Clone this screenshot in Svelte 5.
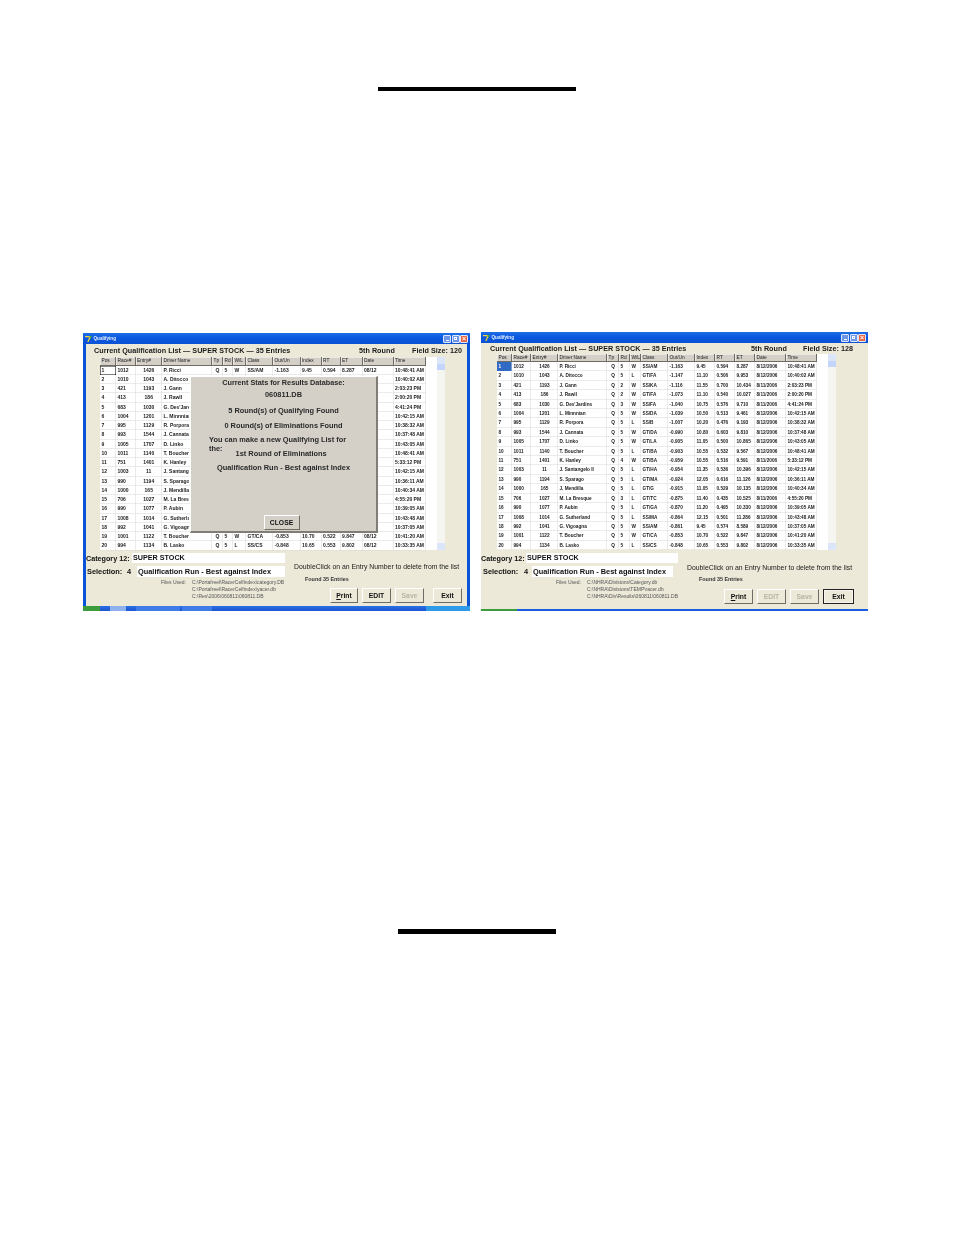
<script>
  const rows = [
    ['1','1012','1426','P. Ricci','Q','5','W','SS/AM','-1.163','9.45','0.594','8.287','8/12/2006','10:48:41 AM'],
    ['2','1010','1043','A. Ditocco','Q','5','L','GT/FA','-1.147','11.10','0.506','9.953','8/12/2006','10:40:02 AM'],
    ['3','421','1193','J. Gann','Q','2','W','SS/KA','-1.116','11.55','0.700','10.434','8/11/2006','2:03:23 PM'],
    ['4','413','186','J. Rawll','Q','2','W','GT/FA','-1.073','11.10','0.540','10.027','8/11/2006','2:00:20 PM'],
    ['5','683','1030',"G. Des'Jardins",'Q','3','W','SS/FA','-1.040','10.75','0.576','9.710','8/11/2006','4:41:24 PM'],
    ['6','1004','1201','L. Minnnian','Q','5','W','SS/DA','-1.039','10.50','0.513','9.461','8/12/2006','10:42:15 AM'],
    ['7','995','1129','R. Porpora','Q','5','L','SS/B','-1.007','10.20','0.476','9.193','8/12/2006','10:38:32 AM'],
    ['8','993','1544','J. Cannata','Q','5','W','GT/DA','-0.990','10.80','0.603','9.810','8/12/2006','10:37:48 AM'],
    ['9','1005','1707','D. Linko','Q','5','W','GT/LA','-0.905','11.05','0.500','10.865','8/12/2006','10:43:05 AM'],
    ['10','1011','1140','T. Boucher','Q','5','L','GT/BA','-0.903','10.55','0.532','9.567','8/12/2006','10:48:41 AM'],
    ['11','751','1401','K. Hanley','Q','4','W','GT/BA','-0.959','10.55','0.516','9.591','8/11/2006','5:33:12 PM'],
    ['12','1003','11','J. Santangelo II','Q','5','L','GT/HA','-0.954','11.35','0.536','10.396','8/12/2006','10:42:15 AM'],
    ['13','990','1194','S. Sparago','Q','5','L','GT/MA','-0.924','12.05','0.616','11.126','8/12/2006','10:36:11 AM'],
    ['14','1000','165','J. Mendilla','Q','5','L','GT/G','-0.915','11.05','0.529','10.135','8/12/2006','10:40:34 AM'],
    ['15','706','1027','M. La Bresque','Q','3','L','GT/TC','-0.875','11.40','0.435','10.525','8/11/2006','4:55:20 PM'],
    ['16','990','1077','P. Aubin','Q','5','L','GT/GA','-0.870','11.20','0.495','10.330','8/12/2006','10:39:05 AM'],
    ['17','1008','1014','G. Sutherland','Q','5','L','SS/MA','-0.864','12.15','0.501','11.286','8/12/2006','10:43:48 AM'],
    ['18','992','1041','G. Vigoagna','Q','5','W','SS/AM','-0.861','9.45','0.574','8.589','8/12/2006','10:37:05 AM'],
    ['19','1001','1122','T. Boucher','Q','5','W','GT/CA','-0.853','10.70','0.522','9.847','8/12/2006','10:41:20 AM'],
    ['20','994','1134','B. Lasko','Q','5','L','SS/CS','-0.848','10.65','0.553','9.802','8/12/2006','10:33:35 AM']
  ];
  const heads = ['Pos','Race#','Entry#','Driver Name','Tp','Rd','W/L','Class','Out/Un','Index','RT','ET','Date','Time'];
  const shortDate = (r) => '0' + r[12].slice(0, 4);
  const behindModal = (i) => i >= 1 && i <= 17;
  const cellText = (side, r, i, j) => {
    if (side !== 'left') return r[j];
    if (behindModal(i) && j >= 4 && j <= 12) return '';
    return j === 12 ? shortDate(r) : r[j];
  };
  const windows = [
    {
      side: 'left', field: '120', cat: '12', sel: '4', editOff: false,
      files: ['C:\\Portafreel\\RacerCelfindex\\category.DB', 'C:\\Portafreel\\RacerCelfindex\\yacer.db', 'C:\\Res\\2006\\060811\\060811.DB']
    },
    {
      side: 'right', field: '128', cat: '12', sel: '4', editOff: true,
      files: ['C:\\NHRA\\Divisions\\Category.db', 'C:\\NHRA\\Divisions\\TEMP\\racer.db', 'C:\\NHRA\\Div\\Results\\060811\\060811.DB']
    }
  ];
</script>

<div class="page">
  <div class="rule-top"></div>
  <div class="shots">
    {#each windows as w}
      <section class="win {w.side}">
        <header class="title">
          <svg class="logo" viewBox="0 0 8 8" width="7" height="7"><path d="M0 1h7L4 8H2.6l2.2-5.5H0z" fill="#f4d23c"/><path d="M5 1h3L6 5z" fill="#3fa34a"/></svg>
          <span class="title-text">Qualifying</span>
          <span class="tbtn"><i class="min"></i></span>
          <span class="tbtn"><i class="max"></i></span>
          <span class="tbtn close">×</span>
        </header>
        <div class="body">
          <div class="heading">
            <span class="h-list">Current Qualification List — SUPER STOCK — 35 Entries</span>
            <span class="h-round">5th Round</span>
            <span class="h-field">Field Size: {w.field}</span>
          </div>
          <div class="list">
            <div class="grid">
              <div class="row head">
                {#each heads as h}<span class="cell">{h}</span>{/each}
              </div>
              {#each rows as r, i}
                <div class="row">
                  {#each r as c, j}
                    <span class="cell" class:sel={i === 0 && j === 0} class:mid={j === 2 || j === 4} class:clip={w.side === 'left' && behindModal(i) && j === 3}>{cellText(w.side, r, i, j)}</span>
                  {/each}
                </div>
              {/each}
            </div>
            <div class="blank"></div>
            <div class="scroll">
              <span class="arrow up"></span>
              <span class="thumb"></span>
              <span class="arrow down"></span>
            </div>
          </div>
          <div class="footer">
            <div class="f-left">
              <div class="line cat">
                <span class="lbl">Category {w.cat}:</span>
                <span class="input">SUPER STOCK</span>
              </div>
              <div class="line selrow">
                <span class="lbl">Selection:</span>
                <span class="num">{w.sel}</span>
                <span class="input big">Qualification Run - Best against Index</span>
              </div>
              <div class="files">
                <span class="f-lbl">Files Used:</span>
                <div class="f-paths">
                  {#each w.files as f}<span>{f}</span>{/each}
                </div>
              </div>
            </div>
            <div class="f-right">
              <div class="note">DoubleClick on an Entry Number to delete from the list</div>
              <div class="found">Found 35 Entries</div>
              <div class="btns">
                <button class="print">Print</button>
                <button disabled={w.editOff}>EDIT</button>
                <button disabled>Save</button>
                <button class="exit" class:on={w.editOff}>Exit</button>
              </div>
            </div>
          </div>
        </div>
        {#if w.side === 'left'}
          <div class="modal">
            <p class="m1">Current Stats for Results Database:</p>
            <p class="m2">060811.DB</p>
            <p class="m3">5 Round(s) of Qualifying Found</p>
            <p class="m4">0 Round(s) of Eliminations Found</p>
            <p class="m5">You can make a new Qualifying List for</p>
            <div class="m-row">
              <p>the:</p>
              <p class="m6">1st Round of Eliminations</p>
            </div>
            <p class="m7">Qualification Run - Best against Index</p>
            <button class="closebtn">CLOSE</button>
          </div>
          <div class="taskbar">
            <span class="start"></span>
            <span class="tray t1"></span>
            <span class="tray t2"></span>
            <span class="tray t3"></span>
            <span class="clock"></span>
          </div>
        {:else}
          <div class="bottomline"><span class="start"></span></div>
        {/if}
      </section>
    {/each}
  </div>
  <div class="rule-bottom"></div>
</div>

<style>
  :global(body) { margin: 0; background: #fff; }
  .page {
    width: 954px; height: 1235px; background: #fff; overflow: hidden;
    display: flex; flex-direction: column; align-items: center;
    font-family: "Liberation Sans", Arial, sans-serif; color: #111;
  }
  .rule-top { width: 198px; height: 4px; margin-top: 87px; background: #000; flex: none; }
  .rule-bottom { width: 158px; height: 5px; margin-top: 318px; background: #000; flex: none; }
  .shots {
    align-self: flex-start; margin: 241px 0 0 83px; display: flex; gap: 11px;
    align-items: flex-end; height: 279px; flex: none;
  }
  .win {
    position: relative; width: 387px; display: flex; flex-direction: column;
    overflow: hidden; background: #0a52d8; filter: blur(0.35px);
  }
  .win.left { height: 278px; }
  .win.right { height: 279px; width: 387px; background: #ece9d8; }

  .title {
    height: 11px; flex: none; display: flex; align-items: center; gap: 0.5px; padding: 0 2px;
    background: linear-gradient(#1f6fe8, #0a58e0 45%, #0a52d4);
    color: #fff;
  }
  .logo { margin-right: 1px; }
  .title-text { font-size: 4.6px; font-weight: 700; margin-right: auto; color: #e8f0ff; }
  .tbtn {
    width: 8px; height: 8px; border-radius: 1px; background: #6d95e8; border: 0.5px solid #dfe8ff;
    box-sizing: border-box; display: flex; align-items: center; justify-content: center;
    font-size: 7px; line-height: 1; font-weight: 700; color: #fff;
  }
  .tbtn.close { background: #e5663f; }
  .tbtn .min { width: 3px; height: 1px; background: #fff; margin-top: 3px; }
  .tbtn .max { width: 3.5px; height: 3.5px; border: 0.5px solid #fff; border-top-width: 1px; box-sizing: border-box; }

  .body { flex: 1; min-height: 0; background: #ece9d8; display: flex; flex-direction: column; }
  .left .body { margin: 0 3px; }

  .heading {
    display: flex; align-items: center; font-weight: 700; font-size: 7.2px; letter-spacing: 0.03px;
    white-space: nowrap; flex: none; color: #1a1a1a;
  }
  .left .heading { height: 13px; padding-left: 8px; }
  .right .heading { height: 11px; padding-left: 9px; }
  .h-list { flex: none; }
  .left .h-list { width: 265px; }
  .right .h-list { width: 261px; }
  .left .h-round { width: 53px; }
  .right .h-round { width: 52px; }

  .list { display: flex; flex: none; }
  .left .list {
    margin-left: 14px; height: 193px;
    --cols: 16px 19.5px 26.5px 50px 11px 10px 13px 27px 27.5px 21px 19px 22px 31px 32px;
    --rowh: 9.26px; --headh: 8.5px; --fs: 5px;
  }
  .right .list {
    margin-left: 16px; height: 196px;
    --cols: 15px 19px 27px 49px 12px 11px 11px 27px 27px 20px 20px 20px 31px 31px;
    --rowh: 9.42px; --headh: 8px; --fs: 4.7px;
  }
  .grid { background: #fff; flex: none; display: flex; flex-direction: column; }
  .row {
    display: grid; grid-template-columns: var(--cols); height: var(--rowh);
    font-size: var(--fs); font-weight: 700; color: #222; box-shadow: inset 0 -0.5px 0 #d9d7d0;
  }
  .row.head {
    height: var(--headh); font-weight: 400; font-size: 4.8px; background: #d4d0c8; box-shadow: none;
  }
  .cell {
    padding-left: 1.5px; overflow: hidden; white-space: nowrap; line-height: var(--rowh);
    box-shadow: inset -0.5px 0 0 #d9d7d0; box-sizing: border-box;
  }
  .cell.mid { text-align: center; padding-left: 0; }
  .cell.clip { width: 27px; box-shadow: none; }
  .head .cell {
    line-height: var(--headh); box-shadow: inset -1px -1px 0 #6f6c64, inset 0.5px 0.5px 0 #fff;
  }
  .left .cell.sel { box-shadow: inset 0 0 0 0.6px #111; }
  .right .cell.sel { background: #316ac5; color: #fff; }
  .blank { background: #fff; flex: none; width: 11px; }
  .scroll {
    width: 8px; background: #f5f5f2; display: flex; flex-direction: column; position: relative;
  }
  .arrow { height: 7px; background: #dbe6fb; flex: none; }
  .arrow.down { margin-top: auto; }
  .thumb { height: 6px; background: #c3d5fb; flex: none; }

  .footer { display: grid; flex: 1; min-height: 0; font-size: 7.4px; }
  .left .footer { grid-template-columns: 203px 1fr; }
  .right .footer { grid-template-columns: 202px 1fr; }
  .line { display: flex; align-items: center; white-space: nowrap; font-weight: 700; }
  .lbl { flex: none; }
  .input {
    background: #fff; flex: none; height: 10px; line-height: 10px; padding-left: 1px; overflow: hidden;
    font-weight: 700; box-sizing: border-box;
  }
  .cat { margin-top: 3px; height: 10px; font-size: 7.2px; }
  .left .cat .lbl { width: 46px; }
  .right .cat .lbl { width: 45px; }
  .left .cat .input { width: 153px; }
  .right .cat .input { width: 152px; }
  .selrow { margin-top: 3px; height: 11px; }
  .selrow .lbl { width: 41px; padding-left: 1px; box-sizing: border-box; }
  .right .selrow .lbl { padding-left: 2px; width: 43px; }
  .num { width: 10px; flex: none; }
  .right .num { width: 8px; }
  .input.big { height: 11px; line-height: 11px; }
  .left .input.big { width: 148px; }
  .right .input.big { width: 141px; }
  .files { display: flex; font-size: 5px; color: #555; margin-top: 2px; padding-left: 75px; }
  .f-lbl { width: 31px; flex: none; line-height: 7.2px; }
  .f-paths { display: flex; flex-direction: column; white-space: nowrap; line-height: 7.2px; }

  .f-right { display: flex; flex-direction: column; min-width: 0; }
  .note { white-space: nowrap; font-size: 6.85px; line-height: 8px; font-weight: 400; color: #1a1a1a; margin-top: 13px; }
  .left .note { padding-left: 5px; }
  .right .note { padding-left: 4px; margin-top: 14px; }
  .found { font-size: 5.4px; line-height: 6px; font-weight: 700; color: #333; margin-top: 5px; padding-left: 16px; }
  .right .found { margin-top: 4px; }
  .btns { display: flex; gap: 4px; margin-top: 6px; padding-right: 5px; justify-content: flex-end; }
  .right .btns { padding-right: 14px; margin-top: 7px; }
  .btns button {
    width: 29px; height: 15px; padding: 0; background: #ece9d8; font: 700 6.8px "Liberation Sans", Arial, sans-serif; color: #111;
    border: 0.5px solid #fff; border-right: 1px solid #6f6c64; border-bottom: 1px solid #6f6c64; box-sizing: border-box;
  }
  .btns button:disabled { color: #b8b5a7; }
  .left .btns .print { width: 28px; }
  .left .btns .exit { margin-left: 5px; }
  .btns .exit.on { width: 31px; border: 1px solid #222; box-shadow: inset 0 0 0 0.5px #fff; }
  .print::first-letter { text-decoration: underline; }

  .modal {
    position: absolute; left: 107px; top: 43px; width: 188px; height: 157px; box-sizing: border-box;
    background: #d4d0c8; border: 0.5px solid #fff; border-right: 2px solid #807d76; border-bottom: 2px solid #807d76;
    display: flex; flex-direction: column; align-items: center; font-size: 7.4px; font-weight: 700; color: #2a2a2a;
  }
  .modal p { margin: 0; line-height: 8px; white-space: nowrap; }
  .modal .m1 { margin-top: 1.5px; font-size: 7.25px; }
  .modal .m2 { margin-top: 4px; }
  .modal .m3 { margin-top: 8px; }
  .modal .m4 { margin-top: 7px; }
  .modal .m5 { margin-top: 6px; align-self: flex-start; padding-left: 18px; }
  .m-row { display: flex; align-self: stretch; padding-left: 18px; height: 13px; margin-top: 1px; }
  .modal .m6 { margin: 5px 0 0 13px; }
  .modal .m7 { margin-top: 6px; }
  .closebtn {
    margin: 43px 4px 0 0; width: 36px; height: 15px; padding: 0; background: #d4d0c8;
    font: 700 6.8px "Liberation Sans", Arial, sans-serif; color: #111;
    border: 0.5px solid #fff; border-right: 1px solid #6f6c64; border-bottom: 1px solid #6f6c64;
  }
  .taskbar {
    flex: none; height: 5px; background: linear-gradient(#2a6fe6, #1b54cf); display: flex; align-items: stretch;
  }
  .start { width: 17px; background: #3c9b3c; display: block; }
  .tray { display: block; background: #3f7ce8; margin-right: 2px; }
  .t1 { width: 16px; margin-left: 10px; background: #8fb2ee; }
  .t2 { width: 44px; margin-left: 8px; }
  .t3 { width: 30px; }
  .clock { margin-left: auto; width: 44px; background: #2f9be8; }
  .bottomline { height: 2px; flex: none; background: #1b5fe0; display: flex; }
  .bottomline .start { width: 36px; }
</style>
